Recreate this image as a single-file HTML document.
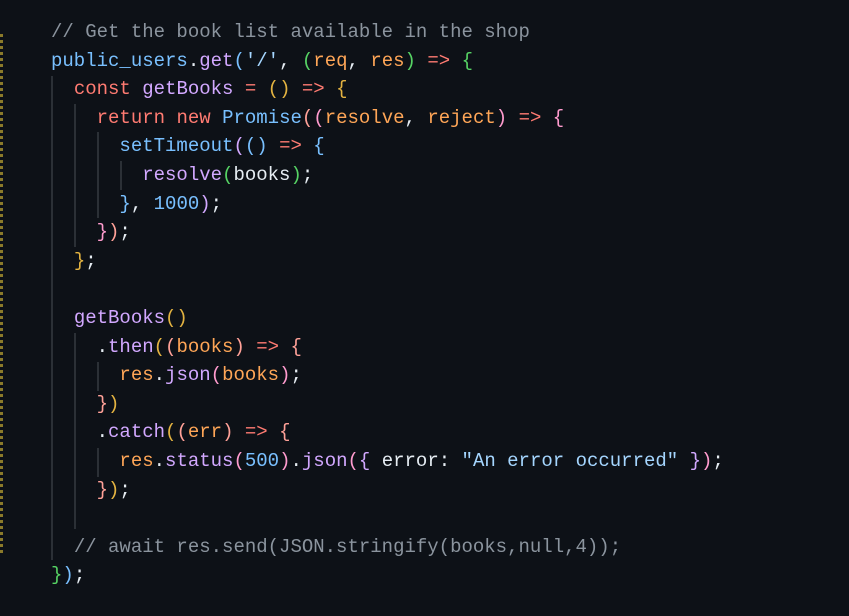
<!DOCTYPE html>
<html><head><meta charset="utf-8"><style>
html,body{margin:0;padding:0;}
body{width:849px;height:616px;background:#0d1117;overflow:hidden;position:relative;font-family:"Liberation Mono",monospace;font-size:19px;color:#e6edf3;}
.bar{position:absolute;left:0;top:34px;width:3px;height:520px;background:repeating-linear-gradient(to bottom,#8a7a2a 0 3px,transparent 3px 6px);}
.g{position:absolute;width:2px;background:#2b3036;}
pre{position:absolute;left:51px;top:18px;margin:0;font:inherit;line-height:28.6px;white-space:pre;}
.c{color:#8b949e}.k{color:#ff7b72}.f{color:#d2a8ff}.b{color:#79c0ff}.o{color:#ffa657}.s{color:#a5d6ff}
.p1{color:#79c0ff}.p2{color:#56d364}.p3{color:#e3b341}.p4{color:#ffa198}.p5{color:#ff9bce}.p6{color:#d2a8ff}
</style></head><body>
<div class="bar"></div>
<div class="g" style="left:51px;top:76px;height:484px"></div>
<div class="g" style="left:74px;top:104px;height:143px"></div>
<div class="g" style="left:97px;top:132px;height:86px"></div>
<div class="g" style="left:120px;top:161px;height:29px"></div>
<div class="g" style="left:74px;top:333px;height:196px"></div>
<div class="g" style="left:97px;top:362px;height:29px"></div>
<div class="g" style="left:97px;top:448px;height:29px"></div>
<pre><span class="c">// Get the book list available in the shop</span>
<span class="b">public_users</span>.<span class="f">get</span><span class="p1">(</span><span class="s">'/'</span>, <span class="p2">(</span><span class="o">req</span>, <span class="o">res</span><span class="p2">)</span> <span class="k">=&gt;</span> <span class="p2">{</span>
  <span class="k">const</span> <span class="f">getBooks</span> <span class="k">=</span> <span class="p3">()</span> <span class="k">=&gt;</span> <span class="p3">{</span>
    <span class="k">return</span> <span class="k">new</span> <span class="b">Promise</span><span class="p4">(</span><span class="p5">(</span><span class="o">resolve</span>, <span class="o">reject</span><span class="p5">)</span> <span class="k">=&gt;</span> <span class="p5">{</span>
      <span class="b">setTimeout</span><span class="p6">(</span><span class="p1">()</span> <span class="k">=&gt;</span> <span class="p1">{</span>
        <span class="f">resolve</span><span class="p2">(</span>books<span class="p2">)</span>;
      <span class="p1">}</span>, <span class="b">1000</span><span class="p6">)</span>;
    <span class="p5">}</span><span class="p4">)</span>;
  <span class="p3">}</span>;

  <span class="f">getBooks</span><span class="p3">()</span>
    .<span class="f">then</span><span class="p3">(</span><span class="p4">(</span><span class="o">books</span><span class="p4">)</span> <span class="k">=&gt;</span> <span class="p4">{</span>
      <span class="o">res</span>.<span class="f">json</span><span class="p5">(</span><span class="o">books</span><span class="p5">)</span>;
    <span class="p4">}</span><span class="p3">)</span>
    .<span class="f">catch</span><span class="p3">(</span><span class="p4">(</span><span class="o">err</span><span class="p4">)</span> <span class="k">=&gt;</span> <span class="p4">{</span>
      <span class="o">res</span>.<span class="f">status</span><span class="p5">(</span><span class="b">500</span><span class="p5">)</span>.<span class="f">json</span><span class="p5">(</span><span class="p6">{</span> error: <span class="s">"An error occurred"</span> <span class="p6">}</span><span class="p5">)</span>;
    <span class="p4">}</span><span class="p3">)</span>;

  <span class="c">// await res.send(JSON.stringify(books,null,4));</span>
<span class="p2">}</span><span class="p1">)</span>;</pre>
</body></html>
